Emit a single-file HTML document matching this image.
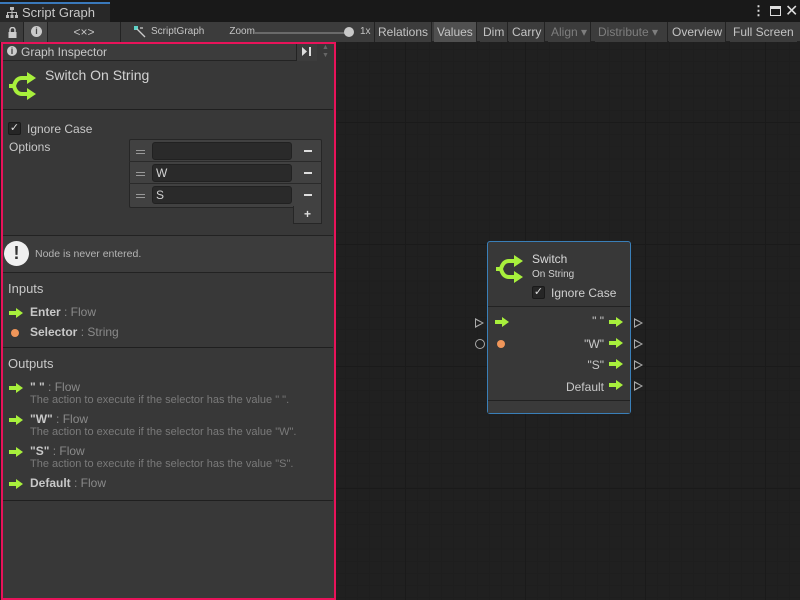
<!DOCTYPE html>
<html><head><style>
*{margin:0;padding:0;box-sizing:border-box}
body{width:800px;height:600px;overflow:hidden;background:#202020;font-family:"Liberation Sans",sans-serif;font-size:12px;color:#c4c4c4;position:relative}
.a{position:absolute}
.grid{left:335px;top:42px;width:465px;height:558px;background-color:#202020;
background-image:linear-gradient(#1a1a1a 1px,transparent 1px),linear-gradient(90deg,#1a1a1a 1px,transparent 1px),linear-gradient(#1e1e1e 1px,transparent 1px),linear-gradient(90deg,#1e1e1e 1px,transparent 1px);
background-size:120px 122px,120px 122px,12px 12.2px,12px 12.2px;background-position:70px 80px,70px 80px,70px 80px,70px 80px}
.tb{height:20px;line-height:20px;background:#3c3c3c;color:#c4c4c4;padding:0 3px;font-size:12px;border-right:1px solid #232323}
.arrow{display:inline-block;width:14px;height:10px;position:relative}
.arrow:before{content:"";position:absolute;left:0;top:3px;width:8px;height:4px;background:#a8f03c}
.arrow:after{content:"";position:absolute;left:7px;top:0;border-left:7px solid #a8f03c;border-top:5px solid transparent;border-bottom:5px solid transparent}
.dot{display:inline-block;width:8px;height:8px;border-radius:50%;background:#f0965a}
.chk{display:inline-block;width:13px;height:13px;background:#262626;border:1px solid #1a1a1a;border-radius:2px;color:#ddd;font-size:11px;line-height:11px;text-align:center}
.sep{height:1px;background:#1f1f1f;left:3px;width:330px}
.out{color:#c8c8c8;font-weight:bold}
.g{color:#8a8a8a;font-weight:normal}
.d{color:#7a7a7a;font-size:11px}
.fld{background:#2a2a2a;border:1px solid #212121;border-radius:3px;height:18px;line-height:16px;padding-left:3px;color:#d2d2d2}
.tri{width:0;height:0;border-left:9px solid #aaa;border-top:5px solid transparent;border-bottom:5px solid transparent}
.tri:after{content:"";position:absolute;left:-8px;top:-3px;border-left:6px solid #202020;border-top:3px solid transparent;border-bottom:3px solid transparent}
.mn{width:8px;height:2px;background:#ddd}
</style></head><body>
<div class="a" style="left:0;top:0;width:800px;height:22px;background:#191919"></div>
<div class="a" style="left:0;top:2px;width:110px;height:20px;background:#282828;border-top:2px solid #3a79bb;color:#c8c8c8;font-size:13px;line-height:17px;padding-left:22px">Script Graph</div>
<svg class="a" style="left:6px;top:7px" width="12" height="11"><rect x="4" y="0" width="4" height="3" fill="#bbb"/><rect x="5.5" y="3" width="1" height="3" fill="#bbb"/><rect x="1" y="5" width="10" height="1" fill="#bbb"/><rect x="1" y="5" width="1" height="3" fill="#bbb"/><rect x="10" y="5" width="1" height="3" fill="#bbb"/><rect x="5.5" y="5" width="1" height="3" fill="#bbb"/><rect x="0" y="8" width="3" height="3" fill="#bbb"/><rect x="4.5" y="8" width="3" height="3" fill="#bbb"/><rect x="9" y="8" width="3" height="3" fill="#bbb"/></svg>
<div class="a" style="left:752px;top:3px;color:#ddd;font-size:13px;font-weight:bold">⋮</div>
<div class="a" style="left:770px;top:6px;width:11px;height:10px;border:1.5px solid #ddd;border-top-width:3px"></div>
<div class="a" style="left:785px;top:1px;color:#ddd;font-size:16px">✕</div>
<div class="a" style="left:0;top:22px;width:800px;height:20px;background:#3c3c3c;border-bottom:1px solid #232323"></div>
<div class="a tb" style="left:0;top:22px;width:24px"></div>
<svg class="a" style="left:8px;top:27px" width="9" height="11"><path d="M2 5 V3 A2.5 2.5 0 0 1 7 3 V5" stroke="#ccc" stroke-width="1.5" fill="none"/><rect x="0.5" y="5" width="8" height="6" fill="#ccc"/></svg>
<div class="a tb" style="left:24px;top:22px;width:24px;background:#4a4a4a"></div>
<div class="a" style="left:31px;top:26px;width:11px;height:11px;border-radius:50%;background:#ccc;color:#4a4a4a;font-size:9px;line-height:11px;text-align:center;font-weight:bold">i</div>
<div class="a tb" style="left:48px;top:22px;width:73px;text-align:center">&lt;×&gt;</div>
<div class="a tb" style="left:121px;top:22px;width:254px;font-size:10px;padding-left:30px">ScriptGraph<span style="margin-left:25px">Zoom</span></div>
<svg class="a" style="left:134px;top:26px" width="12" height="12"><rect x="0" y="0" width="4" height="4" fill="#5fd3c8"/><path d="M3 3 L11 11 M6 2 L9 2" stroke="#ccc" stroke-width="1.3"/></svg>
<div class="a" style="left:255px;top:32px;width:92px;height:2px;background:#6a6a6a"></div>
<div class="a" style="left:344px;top:27px;width:10px;height:10px;border-radius:50%;background:#c8c8c8"></div>
<div class="a" style="left:360px;top:26px;font-size:10px">1x</div>
<div class="a tb" style="left:375px;top:22px">Relations</div>
<div class="a tb" style="left:434px;top:22px;background:#505050">Values</div>
<div class="a tb" style="left:480px;top:22px">Dim</div>
<div class="a tb" style="left:509px;top:22px">Carry</div>
<div class="a tb" style="left:548px;top:22px;color:#7e7e7e">Align ▾</div>
<div class="a tb" style="left:595px;top:22px;color:#7e7e7e;width:73px">Distribute ▾</div>
<div class="a tb" style="left:669px;top:22px">Overview</div>
<div class="a tb" style="left:730px;top:22px;border:none">Full Screen</div>
<div class="a grid"></div>
<div class="a" style="left:1px;top:42px;width:335px;height:558px;background:#383838;border:2px solid #e8135a"></div>
<div class="a" style="left:3px;top:44px;width:293px;height:17px;background:#3c3c3c;border-bottom:1px solid #232323;font-size:12px;line-height:16px;padding-left:18px;color:#c8c8c8">Graph Inspector</div>
<div class="a" style="left:7px;top:46px;width:10px;height:10px;border-radius:50%;background:#ccc;color:#3c3c3c;font-size:9px;line-height:10px;text-align:center;font-weight:bold">i</div>
<div class="a" style="left:296px;top:44px;width:21px;height:17px;background:#3c3c3c;border-left:1px solid #232323"></div>
<svg class="a" style="left:302px;top:46px" width="10" height="11"><path d="M0 1 L5 5.5 L0 10Z" fill="#ddd"/><rect x="7" y="1" width="2" height="9" fill="#ddd"/></svg>
<div class="a" style="left:318px;top:44px;width:15px;height:17px;color:#666;font-size:7px;text-align:center;line-height:8px">▲<br>▼</div>
<svg class="a" style="left:8px;top:71px" width="30" height="30"><path d="M20 7 H14 Q8 7 6 15 Q8 23 14 23 H20" stroke="#a8f03c" stroke-width="4" fill="none"/><path d="M1 15 H7" stroke="#a8f03c" stroke-width="4"/><path d="M19 1 L28 7 L19 13Z M19 17 L28 23 L19 29Z" fill="#a8f03c"/></svg>
<div class="a" style="left:45px;top:67px;font-size:14px;color:#d2d2d2">Switch On String</div>
<div class="a sep" style="top:109px"></div>
<div class="a chk" style="left:8px;top:122px">✓</div>
<div class="a" style="left:27px;top:122px;color:#c8c8c8">Ignore Case</div>
<div class="a" style="left:9px;top:140px;color:#c8c8c8">Options</div>
<div class="a" style="left:129px;top:139px;width:193px;height:69px;background:#414141;border:1px solid #262626;border-radius:2px"></div>
<div class="a" style="left:129px;top:161px;width:193px;height:1px;background:#2a2a2a"></div>
<div class="a" style="left:129px;top:183px;width:193px;height:1px;background:#2a2a2a"></div>
<div class="a" style="left:293px;top:206px;width:29px;height:18px;background:#414141;border:1px solid #262626;border-top:none;color:#ddd;text-align:center;font-weight:bold;line-height:16px">+</div>
<div class="a fld" style="left:152px;top:142px;width:140px"></div>
<div class="a fld" style="left:152px;top:164px;width:140px">W</div>
<div class="a fld" style="left:152px;top:186px;width:140px">S</div>
<div class="a" style="left:136px;top:150px;width:9px;height:4px;border-top:1px solid #999;border-bottom:1px solid #999"></div>
<div class="a" style="left:136px;top:172px;width:9px;height:4px;border-top:1px solid #999;border-bottom:1px solid #999"></div>
<div class="a" style="left:136px;top:194px;width:9px;height:4px;border-top:1px solid #999;border-bottom:1px solid #999"></div>
<div class="a mn" style="left:304px;top:150px"></div>
<div class="a mn" style="left:304px;top:172px"></div>
<div class="a mn" style="left:304px;top:194px"></div>
<div class="a" style="left:3px;top:235px;width:330px;height:38px;background:#3c3c3c;border-top:1px solid #222;border-bottom:1px solid #222"></div>
<div class="a" style="left:4px;top:241px;width:25px;height:25px;border-radius:50%;background:#f0f0f0;color:#333;font-weight:bold;font-size:18px;text-align:center;line-height:25px">!</div>
<div class="a" style="left:35px;top:248px;font-size:10.5px;color:#b4b4b4">Node is never entered.</div>
<div class="a" style="left:8px;top:281px;font-size:13px;color:#c8c8c8">Inputs</div>
<div class="a" style="left:9px;top:307px"><span class="arrow"></span></div>
<div class="a out" style="left:30px;top:305px">Enter <span class="g">: Flow</span></div>
<div class="a dot" style="left:11px;top:329px"></div>
<div class="a out" style="left:30px;top:325px">Selector <span class="g">: String</span></div>
<div class="a sep" style="top:347px"></div>
<div class="a" style="left:8px;top:356px;font-size:13px;color:#c8c8c8">Outputs</div>
<div class="a" style="left:9px;top:382px"><span class="arrow"></span></div>
<div class="a out" style="left:30px;top:380px">" " <span class="g">: Flow</span></div>
<div class="a d" style="left:30px;top:394px">The action to execute if the selector has the value " ".</div>
<div class="a" style="left:9px;top:414px"><span class="arrow"></span></div>
<div class="a out" style="left:30px;top:412px">"W" <span class="g">: Flow</span></div>
<div class="a d" style="left:30px;top:426px">The action to execute if the selector has the value "W".</div>
<div class="a" style="left:9px;top:446px"><span class="arrow"></span></div>
<div class="a out" style="left:30px;top:444px">"S" <span class="g">: Flow</span></div>
<div class="a d" style="left:30px;top:458px">The action to execute if the selector has the value "S".</div>
<div class="a" style="left:9px;top:478px"><span class="arrow"></span></div>
<div class="a out" style="left:30px;top:476px">Default <span class="g">: Flow</span></div>
<div class="a sep" style="top:500px"></div>
<div class="a" style="left:487px;top:241px;width:144px;height:173px;background:#383838;border:1px solid #3a7fb8;border-radius:3px"></div>
<div class="a" style="left:488px;top:306px;width:142px;height:1px;background:#222"></div>
<div class="a" style="left:488px;top:400px;width:142px;height:1px;background:#222"></div>
<div class="a" style="left:488px;top:401px;width:142px;height:12px;background:#3a3a3a"></div>
<svg class="a" style="left:495px;top:255px" width="30" height="28"><path d="M20 6 H14 Q8 6 6 14 Q8 22 14 22 H20" stroke="#a8f03c" stroke-width="4" fill="none"/><path d="M1 14 H7" stroke="#a8f03c" stroke-width="4"/><path d="M19 0 L28 6 L19 12Z M19 16 L28 22 L19 28Z" fill="#a8f03c"/></svg>
<div class="a" style="left:532px;top:252px;font-size:12px;color:#d8d8d8">Switch</div>
<div class="a" style="left:532px;top:269px;font-size:10px;color:#d0d0d0">On String</div>
<div class="a chk" style="left:532px;top:286px">✓</div>
<div class="a" style="left:551px;top:286px;color:#d0d0d0">Ignore Case</div>
<div class="a" style="left:495px;top:316px"><span class="arrow"></span></div>
<div class="a dot" style="left:497px;top:340px"></div>
<div class="a" style="left:560px;top:314px;width:44px;text-align:right;color:#c8c8c8">" "</div>
<div class="a" style="left:560px;top:337px;width:44px;text-align:right;color:#c8c8c8">"W"</div>
<div class="a" style="left:560px;top:358px;width:44px;text-align:right;color:#c8c8c8">"S"</div>
<div class="a" style="left:550px;top:380px;width:54px;text-align:right;color:#c8c8c8">Default</div>
<div class="a" style="left:609px;top:316px"><span class="arrow"></span></div>
<div class="a" style="left:609px;top:337px"><span class="arrow"></span></div>
<div class="a" style="left:609px;top:358px"><span class="arrow"></span></div>
<div class="a" style="left:609px;top:379px"><span class="arrow"></span></div>
<div class="a tri" style="left:475px;top:318px"></div>
<div class="a" style="left:475px;top:339px;width:10px;height:10px;border:1.3px solid #aaa;border-radius:50%"></div>
<div class="a tri" style="left:634px;top:318px"></div>
<div class="a tri" style="left:634px;top:339px"></div>
<div class="a tri" style="left:634px;top:360px"></div>
<div class="a tri" style="left:634px;top:381px"></div>
</body></html>
